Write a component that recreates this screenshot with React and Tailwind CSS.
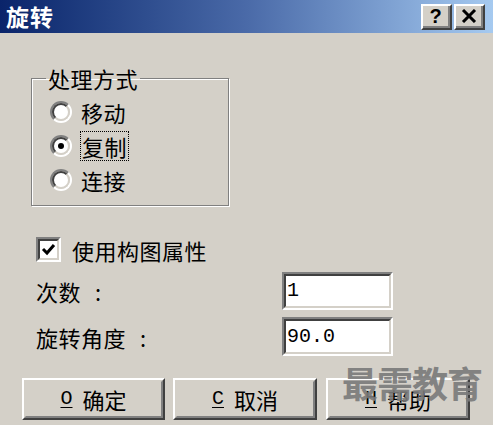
import React from "react";

function Radio({ checked }) {
  return (
    <div className="w-[22px] h-[22px] rounded-full border-2 border-t-[#808080] border-l-[#808080] border-b-white border-r-white shrink-0">
      <div className="w-full h-full rounded-full border-2 border-t-[#404040] border-l-[#404040] border-b-[#d4d0c8] border-r-[#d4d0c8] bg-white flex items-center justify-center">
        {checked && <div className="w-[6px] h-[6px] rounded-full bg-black" />}
      </div>
    </div>
  );
}

function Sunken({ className = "", children }) {
  return (
    <div className={"border-2 border-t-[#808080] border-l-[#808080] border-b-white border-r-white " + className}>
      <div className="w-full h-full border-2 border-t-[#404040] border-l-[#404040] border-b-[#d4d0c8] border-r-[#d4d0c8] bg-white flex items-center">
        {children}
      </div>
    </div>
  );
}

function Btn({ k, label, className = "" }) {
  return (
    <div className={"h-[42px] border-2 border-t-white border-l-white border-b-[#404040] border-r-[#404040] " + className}>
      <div className="w-full h-full border-2 border-t-[#d4d0c8] border-l-[#d4d0c8] border-b-[#808080] border-r-[#808080] flex items-center justify-center text-[22px] leading-none text-black">
        <span className="underline underline-offset-[3px] decoration-1 font-['Liberation_Mono',monospace] text-[20px]">{k}</span>
        <span className="ml-[10px]">{label}</span>
      </div>
    </div>
  );
}

function TitleBtn({ children }) {
  return (
    <div className="w-[31px] h-[26px] border-2 border-t-white border-l-white border-b-[#404040] border-r-[#404040] bg-[#d4d0c8]">
      <div className="w-full h-full border-b-2 border-r-2 border-b-[#808080] border-r-[#808080] flex items-center justify-center">
        {children}
      </div>
    </div>
  );
}

export default function App() {
  return (
    <div className="w-[493px] h-[425px] bg-[#d4d0c8] relative overflow-hidden flex flex-col font-['Noto_Sans_CJK_SC',sans-serif] text-black">
      {/* Title bar */}
      <div className="h-[33px] shrink-0 flex items-center justify-between pl-[6px] pr-[8px] bg-gradient-to-r from-[#0a246a] via-[#4a6aa8] to-[#a6caf0]">
        <span className="text-white font-bold text-[23px] leading-none tracking-[1px]">旋转</span>
        <div className="flex gap-[2px] items-center">
          <TitleBtn>
            <span className="font-['Liberation_Sans',sans-serif] font-bold text-[20px] leading-none">?</span>
          </TitleBtn>
          <TitleBtn>
            <svg width="16" height="14" viewBox="0 0 16 14">
              <path d="M2 1 L14 13 M14 1 L2 13" stroke="black" strokeWidth="3" />
            </svg>
          </TitleBtn>
        </div>
      </div>

      {/* Body */}
      <div className="flex flex-col pl-[31px]">
        <fieldset className="mt-[34px] w-[198px] h-[139px] border border-[#808080] shadow-[inset_1px_1px_0_#fff,1px_1px_0_#fff]">
          <legend className="ml-[14px] px-[2px] text-[22px] leading-[22px] tracking-[0.5px]">处理方式</legend>
          <div className="flex flex-col pl-[18px] pt-[6px]">
            <div className="h-[34px] flex items-center">
              <Radio />
              <span className="ml-[9px] text-[22px] leading-none tracking-[0.5px]">移动</span>
            </div>
            <div className="h-[34px] flex items-center">
              <Radio checked />
              <span className="ml-[8px] px-[1px] py-[3px] border border-dotted border-black text-[22px] leading-none tracking-[0.5px]">复制</span>
            </div>
            <div className="h-[34px] flex items-center">
              <Radio />
              <span className="ml-[9px] text-[22px] leading-none tracking-[0.5px]">连接</span>
            </div>
          </div>
        </fieldset>

        <div className="mt-[31px] ml-[5px] h-[25px] flex items-center">
          <Sunken className="w-[25px] h-[25px]">
            <svg width="17" height="17" viewBox="0 0 17 17" className="mx-auto">
              <path d="M3 8 L7 12 L14 4" fill="none" stroke="black" strokeWidth="3" />
            </svg>
          </Sunken>
          <span className="ml-[11px] text-[22px] leading-none tracking-[0.5px]">使用构图属性</span>
        </div>

        <div className="mt-[10px] ml-[5px] h-[38px] flex items-center">
          <span className="w-[246px] text-[22px] leading-none tracking-[0.5px]">次数<span className="ml-[14px]">:</span></span>
          <Sunken className="w-[111px] h-[38px]">
            <span className="pl-[1px] font-['Liberation_Mono',monospace] text-[20px] leading-none">1</span>
          </Sunken>
        </div>

        <div className="mt-[7px] ml-[5px] h-[39px] flex items-center">
          <span className="w-[246px] text-[22px] leading-none tracking-[0.5px]">旋转角度<span className="ml-[14px]">:</span></span>
          <Sunken className="w-[111px] h-[39px]">
            <span className="pl-[1px] font-['Liberation_Mono',monospace] text-[20px] leading-none">90.0</span>
          </Sunken>
        </div>
      </div>

      <div className="mt-[22px] pl-[22px] flex">
        <Btn k="O" label="确定" className="w-[143px]" />
        <Btn k="C" label="取消" className="w-[144px] ml-[8px]" />
        <Btn k="H" label="帮助" className="w-[144px] ml-[9px]" />
      </div>

      {/* Watermark */}
      <div className="absolute left-[342px] top-[364px] text-[36px] font-bold leading-none text-[#7a7a7a] opacity-90 tracking-[-1px]">
        最需教育
      </div>
    </div>
  );
}
